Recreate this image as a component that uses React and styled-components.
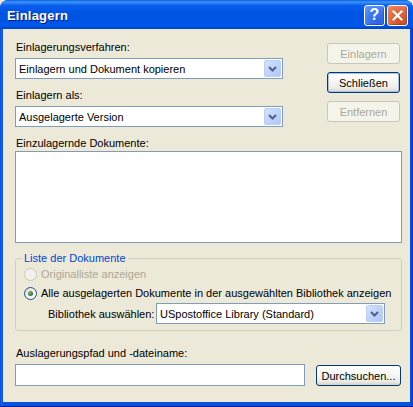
import React from "react";
import styled, { createGlobalStyle } from "styled-components";

const GlobalStyle = createGlobalStyle`
  html, body {
    margin: 0;
    padding: 0;
    background: #ece9d8;
  }
  body {
    font-family: "Liberation Sans", Arial, sans-serif;
    font-size: 11px;
  }
`;

const Chevron = () => (
  <svg width="9" height="6" viewBox="0 0 9 6">
    <path d="M1 1 L4.5 4.5 L8 1" fill="none" stroke="#4d6185" strokeWidth="2" />
  </svg>
);

const ComboBox = ({ value, width }) => (
  <Combo $width={width}>
    <ComboText>{value}</ComboText>
    <ArrowButton>
      <Chevron />
    </ArrowButton>
  </Combo>
);

const RadioOption = ({ checked, disabled, children }) => (
  <RadioRow $disabled={disabled}>
    <RadioCircle $disabled={disabled}>{checked && <RadioDot />}</RadioCircle>
    <span>{children}</span>
  </RadioRow>
);

export default function App() {
  return (
    <>
      <GlobalStyle />
      <Window>
        <TitleBar>
          <Title>Einlagern</Title>
          <TitleButtons>
            <CaptionButton $kind="help">?</CaptionButton>
            <CaptionButton $kind="close">
              <svg width="11" height="11" viewBox="0 0 11 11">
                <path d="M1.5 1.5 L9.5 9.5 M9.5 1.5 L1.5 9.5" stroke="#fff" strokeWidth="2.2" strokeLinecap="square" />
              </svg>
            </CaptionButton>
          </TitleButtons>
        </TitleBar>
        <Frame>
          <Client>
            <TopSection>
              <LeftColumn>
                <Label>Einlagerungsverfahren:</Label>
                <ComboBox value="Einlagern und Dokument kopieren" width={268} />
                <Label $top={10}>Einlagern als:</Label>
                <ComboBox value="Ausgelagerte Version" width={268} />
              </LeftColumn>
              <ButtonColumn>
                <Button disabled>Einlagern</Button>
                <Button $default>Schließen</Button>
                <Button disabled>Entfernen</Button>
              </ButtonColumn>
            </TopSection>
            <Label $top={10} $bottom={1}>Einzulagernde Dokumente:</Label>
            <ListBox />
            <GroupBox>
              <Legend>Liste der Dokumente</Legend>
              <RadioOption disabled>Originalliste anzeigen</RadioOption>
              <RadioOption checked>
                Alle ausgelagerten Dokumente in der ausgewählten Bibliothek anzeigen
              </RadioOption>
              <LibraryRow>
                <span>Bibliothek auswählen:</span>
                <ComboBox value="USpostoffice Library  (Standard)" width={229} />
              </LibraryRow>
            </GroupBox>
            <Label $top={16}>Auslagerungspfad und -dateiname:</Label>
            <PathRow>
              <TextBox />
              <Button $width={85}>Durchsuchen...</Button>
            </PathRow>
          </Client>
        </Frame>
      </Window>
    </>
  );
}

const Window = styled.div`
  width: 413px;
  height: 407px;
  display: flex;
  flex-direction: column;
  box-sizing: border-box;
  overflow: hidden;
  border-radius: 8px 8px 0 0;
  background: #0054e3;
`;

const TitleBar = styled.div`
  height: 29px;
  flex: none;
  display: flex;
  align-items: center;
  justify-content: space-between;
  padding: 0 5px 0 7px;
  box-sizing: border-box;
  border-radius: 8px 8px 0 0;
  background: linear-gradient(
    to bottom,
    #0a5fd8 0%,
    #3d95ff 7%,
    #0b61ee 18%,
    #0055e5 40%,
    #0054e3 70%,
    #0058ee 88%,
    #0043c4 100%
  );
`;

const Title = styled.div`
  color: #ffffff;
  font-family: "Liberation Sans", Arial, sans-serif;
  font-weight: bold;
  font-size: 13px;
  letter-spacing: 0.2px;
  text-shadow: 1px 1px 0 #0a1883;
  margin-top: 1px;
`;

const TitleButtons = styled.div`
  display: flex;
  gap: 2px;
  margin-top: 1px;
`;

const CaptionButton = styled.div`
  width: 21px;
  height: 21px;
  box-sizing: border-box;
  border: 1px solid #ffffff;
  border-radius: 3px;
  display: flex;
  align-items: center;
  justify-content: center;
  color: #ffffff;
  font-family: "Liberation Sans", Arial, sans-serif;
  font-weight: bold;
  font-size: 16px;
  background: ${(p) =>
    p.$kind === "close"
      ? "radial-gradient(circle at 70% 80%, #cc4f22 0%, #e2673f 50%, #f08a68 100%)"
      : "radial-gradient(circle at 70% 80%, #2a63e8 0%, #3b78f2 50%, #6a9cf8 100%)"};
  box-shadow: inset -1px -1px 1px rgba(0, 0, 0, 0.25);
`;

const Frame = styled.div`
  flex: 1;
  display: flex;
  padding: 0 3px 4px 3px;
  box-sizing: border-box;
  background: linear-gradient(to right, #0831d9 0, #166aee 1px, #0855dd 3px, #0855dd 410px, #0831d9 100%);
  border-bottom: 1px solid #001ea0;
`;

const Client = styled.div`
  flex: 1;
  display: flex;
  flex-direction: column;
  background: #ece9d8;
  padding: 12px 8px 0 12px;
  box-sizing: border-box;
  color: #000000;
`;

const TopSection = styled.div`
  display: flex;
  justify-content: space-between;
  align-items: flex-start;
`;

const LeftColumn = styled.div`
  display: flex;
  flex-direction: column;
`;

const ButtonColumn = styled.div`
  display: flex;
  flex-direction: column;
  gap: 8px;
  margin: 2px 2px 0 0;
`;

const Label = styled.div`
  height: 13px;
  line-height: 13px;
  margin-top: ${(p) => p.$top || 0}px;
  margin-bottom: ${(p) => (p.$bottom !== undefined ? p.$bottom : 4)}px;
  margin-left: 1px;
  white-space: nowrap;
`;

const Combo = styled.div`
  width: ${(p) => p.$width}px;
  height: 21px;
  box-sizing: border-box;
  border: 1px solid #7f9db9;
  background: #ffffff;
  display: flex;
  align-items: center;
  justify-content: space-between;
  padding: 1px;
`;

const ComboText = styled.span`
  padding-left: 2px;
  white-space: nowrap;
`;

const ArrowButton = styled.div`
  width: 17px;
  height: 17px;
  box-sizing: border-box;
  border: 1px solid #bacdf7;
  border-radius: 2px;
  background: linear-gradient(135deg, #d6e3fe 0%, #c0d3fb 50%, #afc6f7 100%);
  display: flex;
  align-items: center;
  justify-content: center;
`;

const Button = styled.button`
  width: ${(p) => p.$width || 73}px;
  height: 21px;
  box-sizing: border-box;
  padding: 0;
  font-family: "Liberation Sans", Arial, sans-serif;
  font-size: 11px;
  border-radius: 3px;
  border: 1px solid #003c74;
  color: #000000;
  background: linear-gradient(to bottom, #ffffff 0%, #f7f7f4 40%, #ecebe5 80%, #d8d2c6 100%);
  box-shadow: ${(p) => (p.$default ? "inset 0 0 0 1px #a8c0eb" : "none")};
  &:disabled {
    border-color: #c9c7ba;
    color: #aca899;
    background: #f5f4ea;
    box-shadow: none;
  }
`;

const ListBox = styled.div`
  width: 387px;
  height: 92px;
  box-sizing: border-box;
  border: 1px solid #7f9db9;
  background: #ffffff;
`;

const GroupBox = styled.fieldset`
  width: 387px;
  box-sizing: border-box;
  margin: 9px 0 0 0;
  padding: 2px 8px 6px 8px;
  border: 1px solid #d0d0bf;
  border-radius: 3px;
  display: flex;
  flex-direction: column;
  gap: 5px;
`;

const Legend = styled.legend`
  color: #0046d5;
  padding: 0 2px;
  margin-left: -2px;
  line-height: 13px;
`;

const RadioRow = styled.div`
  display: flex;
  align-items: center;
  gap: 4px;
  height: 14px;
  white-space: nowrap;
  color: ${(p) => (p.$disabled ? "#aca899" : "#000000")};
`;

const RadioCircle = styled.div`
  width: 13px;
  height: 13px;
  box-sizing: border-box;
  border-radius: 50%;
  border: 1px solid ${(p) => (p.$disabled ? "#cac8bb" : "#1c5180")};
  background: ${(p) =>
    p.$disabled ? "#f2f1ea" : "linear-gradient(135deg, #dcdad5 0%, #f4f3ee 50%, #ffffff 100%)"};
  display: flex;
  align-items: center;
  justify-content: center;
`;

const RadioDot = styled.div`
  width: 5px;
  height: 5px;
  border-radius: 50%;
  background: radial-gradient(circle at 35% 35%, #7fb27f 0%, #3f7a3f 60%, #2e5e2e 100%);
`;

const LibraryRow = styled.div`
  display: flex;
  align-items: center;
  margin: -2px 0 0 24px;
  white-space: nowrap;
  & > span {
    width: 108px;
  }
`;

const PathRow = styled.div`
  display: flex;
  align-items: flex-start;
  gap: 11px;
`;

const TextBox = styled.div`
  width: 290px;
  height: 22px;
  box-sizing: border-box;
  border: 1px solid #7f9db9;
  background: #ffffff;
  & + button {
    margin-top: 1px;
  }
`;
